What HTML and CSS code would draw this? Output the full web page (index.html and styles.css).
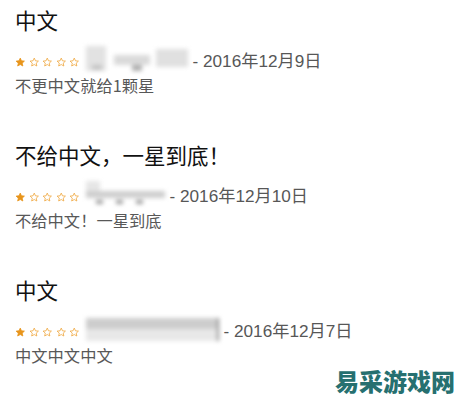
FILE: index.html
```html
<!DOCTYPE html>
<html lang="zh">
<head>
<meta charset="utf-8">
<link rel="stylesheet" href="styles.css">
</head>
<body>
<svg width="0" height="0" class="defs">
  <defs>
    <symbol id="star" viewBox="0 0 24 24">
      <path d="M12 2.5l2.8 6.2 6.7.7-5 4.6 1.4 6.6L12 17.2l-5.9 3.4 1.4-6.6-5-4.6 6.7-.7z"/>
    </symbol>
  </defs>
</svg>
<main class="list">
  <section class="review">
    <h2 class="title">中文</h2>
    <div class="meta">
      <span class="stars">
        <svg class="star on"><use href="#star"/></svg><svg class="star"><use href="#star"/></svg><svg class="star"><use href="#star"/></svg><svg class="star"><use href="#star"/></svg><svg class="star"><use href="#star"/></svg>
      </span>
      <span class="blur b1"><i class="p1"></i><i class="p2"></i><i class="p3"></i><i class="p4"></i><i class="p5"></i></span>
      <span class="date">- 2016年12月9日</span>
    </div>
    <p class="body">不更中文就给1颗星</p>
  </section>
  <section class="review">
    <h2 class="title">不给中文，一星到底！</h2>
    <div class="meta">
      <span class="stars">
        <svg class="star on"><use href="#star"/></svg><svg class="star"><use href="#star"/></svg><svg class="star"><use href="#star"/></svg><svg class="star"><use href="#star"/></svg><svg class="star"><use href="#star"/></svg>
      </span>
      <span class="blur b2"><i class="q1"></i><i class="q2"></i><i class="q3"></i><i class="q4"></i><i class="q5"></i></span>
      <span class="date">- 2016年12月10日</span>
    </div>
    <p class="body">不给中文！一星到底</p>
  </section>
  <section class="review">
    <h2 class="title">中文</h2>
    <div class="meta">
      <span class="stars">
        <svg class="star on"><use href="#star"/></svg><svg class="star"><use href="#star"/></svg><svg class="star"><use href="#star"/></svg><svg class="star"><use href="#star"/></svg><svg class="star"><use href="#star"/></svg>
      </span>
      <span class="blur b3"><i class="r1"></i><i class="r2"></i><i class="r3"></i></span>
      <span class="date">- 2016年12月7日</span>
    </div>
    <p class="body">中文中文中文</p>
  </section>
</main>
<div class="watermark">易采游戏网</div>
</body>
</html>
```
FILE: styles.css
```css
html, body {
  margin: 0;
  padding: 0;
  background: #ffffff;
}
body {
  width: 463px;
  height: 400px;
  position: relative;
  overflow: hidden;
  font-family: "Liberation Sans", "Noto Sans CJK SC", sans-serif;
}
.defs {
  position: absolute;
}
.list {
  display: flex;
  flex-direction: column;
  gap: 44px;
  padding: 5px 0 0 15px;
}
.review {
  display: flex;
  flex-direction: column;
}
.title {
  margin: 0;
  font-family: "Noto Sans CJK SC", sans-serif;
  font-weight: 400;
  font-size: 21.5px;
  line-height: 30px;
  color: #111;
}
.meta {
  display: flex;
  align-items: center;
  height: 28px;
  margin-top: 10px;
}
.stars {
  display: flex;
  gap: 3px;
  margin-top: 6px;
}
.star {
  width: 10.5px;
  height: 10.5px;
  fill: none;
  stroke: #eea53a;
  stroke-width: 1.8;
}
.star.on {
  fill: #e8951c;
  stroke: #e8951c;
}
.blur {
  position: relative;
  display: block;
  height: 26px;
  margin-left: 6px;
  filter: blur(2px);
}
.blur i {
  position: absolute;
  display: block;
}
.b1 { width: 102px; }
.b1 .p1 { left: 0; top: 0; width: 20px; height: 25px; background: #e2e2e2; }
.b1 .p2 { left: 28px; top: 9px; width: 36px; height: 10px; background: #dadada; }
.b1 .p3 { left: 70px; top: 3px; width: 32px; height: 18px; background: #e0e0e0; }
.b1 .p4 { left: 46px; top: 19px; width: 10px; height: 6px; background: #b0b0b0; }
.b1 .p5 { left: 6px; top: 19px; width: 10px; height: 5px; background: #c4c4c4; }
.b2 { width: 79px; }
.b2 .q1 { left: 0; top: 0; width: 14px; height: 16px; background: #e6e6e6; }
.b2 .q2 { left: 0; top: 10px; width: 79px; height: 7px; background: #cecece; }
.b2 .q3 { left: 10px; top: 19px; width: 7px; height: 4px; background: #9c9c9c; }
.b2 .q4 { left: 30px; top: 19px; width: 7px; height: 4px; background: #9c9c9c; }
.b2 .q5 { left: 50px; top: 19px; width: 7px; height: 4px; background: #9c9c9c; }
.b3 { width: 133px; }
.b3 .r1 { left: 0; top: 2px; width: 131px; height: 11px; background: #cdcdcd; }
.b3 .r2 { left: 0; top: 13px; width: 131px; height: 12px; background: #e8e8e8; }
.b3 .r3 { left: 131px; top: 2px; width: 2px; height: 23px; background: #8a8a8a; }
.date {
  margin-left: 5px;
  font-size: 17.2px;
  color: #575757;
  white-space: nowrap;
}
.body {
  margin: 1px 0 0;
  font-family: "Noto Sans CJK SC", sans-serif;
  font-size: 16.3px;
  line-height: 22px;
  color: #585858;
}
.watermark {
  position: absolute;
  left: 335px;
  top: 366px;
  font-family: "Noto Sans CJK SC", serif;
  font-weight: 900;
  font-size: 24px;
  line-height: 30px;
  color: #267070;
}
```
